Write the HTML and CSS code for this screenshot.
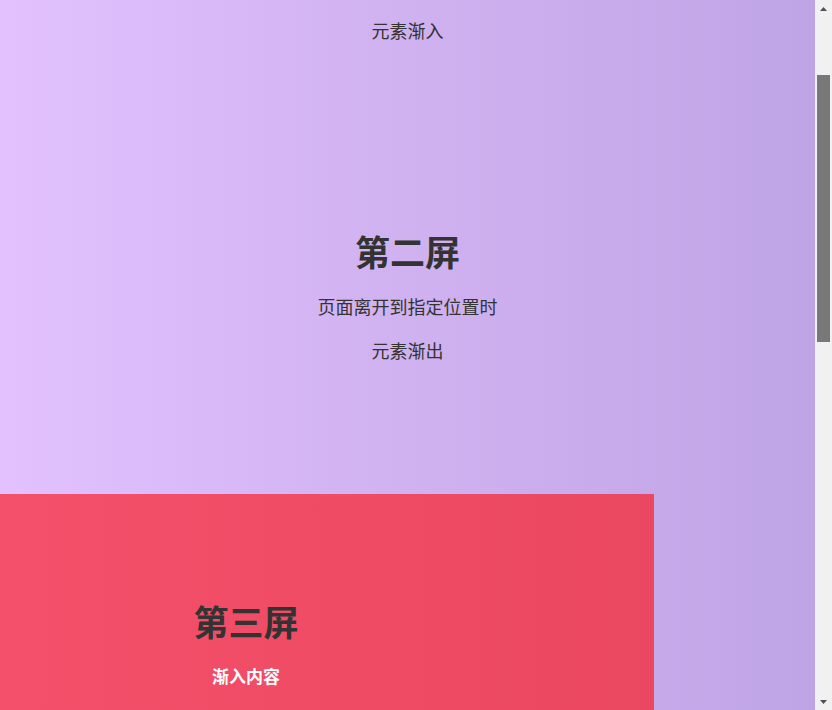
FILE: index.html
```html
<!DOCTYPE html>
<html lang="zh-CN">
<head>
<meta charset="utf-8">
<title>滚动渐入渐出</title>
<link rel="stylesheet" href="styles.css">
</head>
<body>
  <main class="page" id="page">
    <section class="screen screen-one">
      <h2 class="title">第一屏</h2>
      <p class="text">页面滚动到指定位置时</p>
      <p class="text">元素渐入</p>
    </section>
    <section class="screen screen-two">
      <h2 class="title">第二屏</h2>
      <p class="text">页面离开到指定位置时</p>
      <p class="text">元素渐出</p>
    </section>
    <section class="screen screen-three">
      <h2 class="title">第三屏</h2>
      <p class="text text-light">渐入内容</p>
    </section>
    <section class="screen screen-four">
      <h2 class="title">第四屏</h2>
      <p class="text">页面滚动到指定位置时</p>
      <p class="text">元素渐入</p>
    </section>
  </main>
  <aside class="scrollbar" aria-hidden="true">
    <div class="sb-button">
      <svg width="7" height="4" viewBox="0 0 7 4"><polygon points="0,4 3.5,0 7,4" fill="#505050"/></svg>
    </div>
    <div class="sb-track">
      <div class="sb-thumb"></div>
    </div>
    <div class="sb-button">
      <svg width="7" height="4" viewBox="0 0 7 4"><polygon points="0,0 7,0 3.5,4" fill="#505050"/></svg>
    </div>
  </aside>
  <script src="script.js"></script>
</body>
</html>
```

FILE: styles.css
```css
html, body {
  margin: 0;
  padding: 0;
  height: 100%;
}

body {
  display: flex;
  overflow: hidden;
  font-family: "Noto Sans CJK SC", "Noto Sans", sans-serif;
  color: #333;
  background: #f1f1f1;
}

.page {
  flex: 1;
  height: 100%;
  overflow: hidden;
  background: linear-gradient(to right, #e2c1fe 0%, #d2b3f2 45%, #bfa4e5 100%);
}

.screen {
  box-sizing: border-box;
  text-align: center;
}

.screen-one {
  height: 283px;
  padding-top: 69px;
}

.screen-two {
  height: 369px;
  padding-top: 106px;
}

.screen-three {
  width: calc(80% + 2px);
  height: 370px;
  padding-top: 107px;
  padding-right: 162px;
  background: linear-gradient(to right, #f5506b 0%, #ea4760 100%);
}

.screen-four {
  height: 780px;
  padding-top: 200px;
}

.title {
  margin: 0 0 22px;
  font-size: 35px;
  line-height: 40px;
  font-weight: 700;
  color: #333;
}

.text {
  margin: 18px 0;
  font-size: 18px;
  line-height: 26px;
  color: #333;
}

.title + .text {
  margin-top: 0;
}

.text-light {
  font-size: 17px;
  line-height: 25px;
  font-weight: 700;
  color: #fff;
}

.scrollbar {
  flex: 0 0 17px;
  width: 17px;
  height: 100%;
  display: flex;
  flex-direction: column;
  background: #f1f1f1;
}

.sb-button {
  flex: 0 0 17px;
  display: flex;
  align-items: center;
  justify-content: center;
}

.sb-button svg {
  display: block;
}

.sb-track {
  flex: 1;
}

.sb-thumb {
  margin: 58px 2px 0;
  height: 267px;
  background: #787878;
}
```

FILE: script.js
```js
var page = document.getElementById("page");
page.scrollTop = 158;
window.addEventListener("load", function () {
  page.scrollTop = 158;
});
```
